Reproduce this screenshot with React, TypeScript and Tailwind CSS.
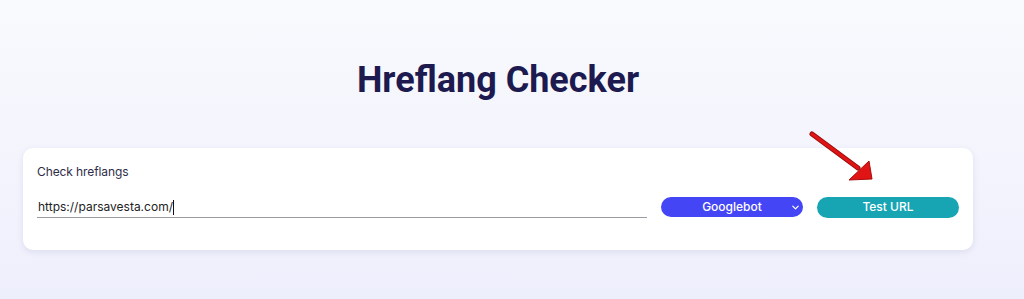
import React from "react";

export default function App() {
  return (
    <div
      className="relative w-[1024px] h-[299px] overflow-hidden bg-gradient-to-b from-[#f9fafd] to-[#eeeffc]"
      style={{ fontFamily: "Inter, 'Noto Sans', sans-serif" }}
    >
      <div className="ml-[23px] w-[950px] pt-[58px]">
        <h1
          className="text-center text-[36px] leading-[44px] font-bold text-[#1c1a4f]"
          style={{ fontFamily: "Roboto, Inter, sans-serif" }}
        >
          Hreflang Checker
        </h1>
        <div className="mt-[46px] h-[102px] rounded-[10px] bg-white shadow-[0_2px_6px_rgba(80,80,140,0.12)] px-[14px] pt-[15px]">
          <div className="text-[12px] leading-[18px] text-[#2e2c48] tracking-[-0.1px]">Check hreflangs</div>
          <div className="mt-[15px] flex items-center">
            <div className="w-[610px] border-b border-[#9a9aa2] h-[22px] flex items-end pb-[2px]">
              <span className="text-[12px] leading-[16px] text-[#222] pl-[1px]">https://parsavesta.com/</span>
              <span className="inline-block w-[1px] h-[15px] bg-[#111]"></span>
            </div>
            <div className="ml-[14px] w-[142px] h-[20px] rounded-full bg-[#4446f6] flex items-center relative">
              <span className="flex-1 text-center text-white text-[12px] font-medium leading-none">Googlebot</span>
              <svg className="absolute right-[3px] top-[6px]" width="9" height="9" viewBox="0 0 10 10">
                <path d="M2 3.5 L5 6.5 L8 3.5" stroke="white" strokeWidth="1.4" fill="none" strokeLinecap="round" strokeLinejoin="round" />
              </svg>
            </div>
            <div className="ml-[14px] w-[142px] h-[21px] rounded-full bg-[#17a5b4] flex items-center justify-center">
              <span className="text-white text-[12px] font-medium leading-none">Test URL</span>
            </div>
          </div>
        </div>
      </div>
      <svg className="absolute left-0 top-0 pointer-events-none" width="1024" height="299">
        <line x1="812" y1="134" x2="858" y2="168" stroke="#9b0d0d" strokeWidth="5" strokeLinecap="round" />
        <line x1="812" y1="134" x2="858" y2="168" stroke="#e01414" strokeWidth="3" strokeLinecap="round" />
        <polygon points="872,179 849,180 869,161" fill="#e01414" stroke="#a80c0c" strokeWidth="1" strokeLinejoin="round" />
      </svg>
    </div>
  );
}
